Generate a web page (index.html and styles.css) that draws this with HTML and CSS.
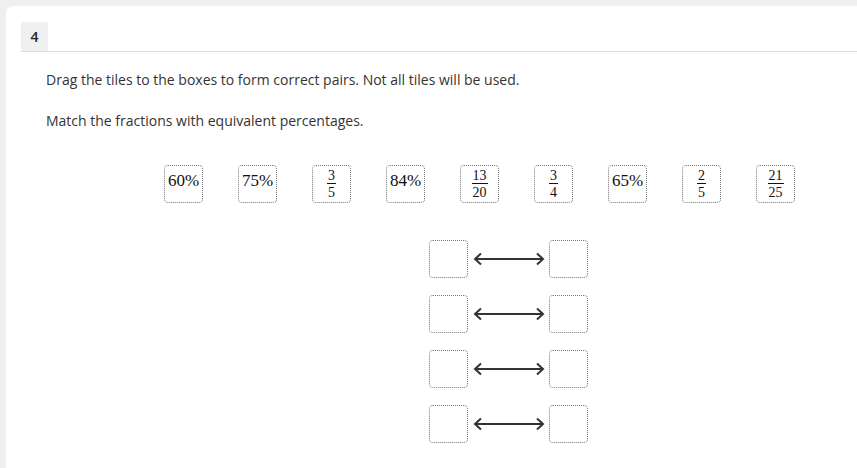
FILE: index.html
```html
<!DOCTYPE html>
<html>
<head>
<meta charset="utf-8">
<link rel="stylesheet" href="styles.css">
</head>
<body>
<div class="card">
  <div class="header"><div class="num">4</div></div>
  <div class="content">
    <p class="line1">Drag the tiles to the boxes to form correct pairs. Not all tiles will be used.</p>
    <p class="line2">Match the fractions with equivalent percentages.</p>
    <div class="tiles">
      <div class="tile"><span class="pct">60%</span></div>
      <div class="tile"><span class="pct">75%</span></div>
      <div class="tile frac"><span class="n">3</span><span class="d">5</span></div>
      <div class="tile"><span class="pct">84%</span></div>
      <div class="tile frac"><span class="n">13</span><span class="d">20</span></div>
      <div class="tile frac"><span class="n">3</span><span class="d">4</span></div>
      <div class="tile"><span class="pct">65%</span></div>
      <div class="tile frac"><span class="n">2</span><span class="d">5</span></div>
      <div class="tile frac"><span class="n">21</span><span class="d">25</span></div>
    </div>
    <div class="pairs">
      <div class="pair"><div class="box"></div><svg class="arrow" width="72" height="14" viewBox="0 0 72 14"><path d="M2 7H70M8 1.5L2 7L8 12.5M64 1.5L70 7L64 12.5" fill="none" stroke="#333" stroke-width="2"/></svg><div class="box"></div></div>
      <div class="pair"><div class="box"></div><svg class="arrow" width="72" height="14" viewBox="0 0 72 14"><path d="M2 7H70M8 1.5L2 7L8 12.5M64 1.5L70 7L64 12.5" fill="none" stroke="#333" stroke-width="2"/></svg><div class="box"></div></div>
      <div class="pair"><div class="box"></div><svg class="arrow" width="72" height="14" viewBox="0 0 72 14"><path d="M2 7H70M8 1.5L2 7L8 12.5M64 1.5L70 7L64 12.5" fill="none" stroke="#333" stroke-width="2"/></svg><div class="box"></div></div>
      <div class="pair"><div class="box"></div><svg class="arrow" width="72" height="14" viewBox="0 0 72 14"><path d="M2 7H70M8 1.5L2 7L8 12.5M64 1.5L70 7L64 12.5" fill="none" stroke="#333" stroke-width="2"/></svg><div class="box"></div></div>
    </div>
  </div>
</div>
</body>
</html>
```
FILE: styles.css
```css
html, body {
  margin: 0;
  padding: 0;
}
body {
  background: #efefef;
  padding: 6px 0 0 6px;
  height: 468px;
  box-sizing: border-box;
  overflow: hidden;
  font-family: "Open Sans", "Liberation Sans", sans-serif;
  color: #333;
}
.card {
  background: #fff;
  border-radius: 7px 0 0 0;
  height: 470px;
  padding-top: 16px;
  padding-left: 15px;
  box-sizing: border-box;
}
.header {
  border-bottom: 1px solid #dcdcdc;
  height: 29px;
  display: flex;
}
.num {
  width: 27px;
  height: 29px;
  background: #f0f0f0;
  font-size: 14px;
  line-height: 29px;
  text-align: center;
  color: #222;
  font-weight: 600;
}
.content {
  padding-left: 25px;
}
.content p {
  margin: 0;
  font-size: 14px;
  line-height: 20px;
}
.line1 {
  padding-top: 18px;
}
.line2 {
  padding-top: 21px;
}
.tiles {
  display: flex;
  gap: 35px;
  padding-left: 118px;
  margin-top: 34px;
}
.tile {
  width: 39px;
  height: 38px;
  box-sizing: border-box;
  border: 1px dotted #777;
  border-radius: 4px;
  font-family: "Liberation Serif", "DejaVu Serif", serif;
  color: #111;
  display: flex;
  flex-direction: column;
  align-items: center;
}
.pct {
  font-size: 17px;
  line-height: 17px;
  margin-top: 6px;
}
.frac {
  justify-content: center;
}
.frac span {
  font-size: 14px;
  line-height: 13px;
  padding: 0 1px;
}
.frac .n {
  border-bottom: 1px solid #111;
  padding-bottom: 1px;
}
.frac .d {
  padding-top: 2px;
}
.pairs {
  display: flex;
  flex-direction: column;
  gap: 17px;
  margin-top: 37px;
  padding-left: 383px;
}
.pair {
  display: flex;
  align-items: center;
}
.box {
  width: 39px;
  height: 38px;
  box-sizing: border-box;
  border: 1px dotted #777;
  border-radius: 4px;
}
.arrow {
  display: block;
  margin: 0 4px 0 5px;
}
```
